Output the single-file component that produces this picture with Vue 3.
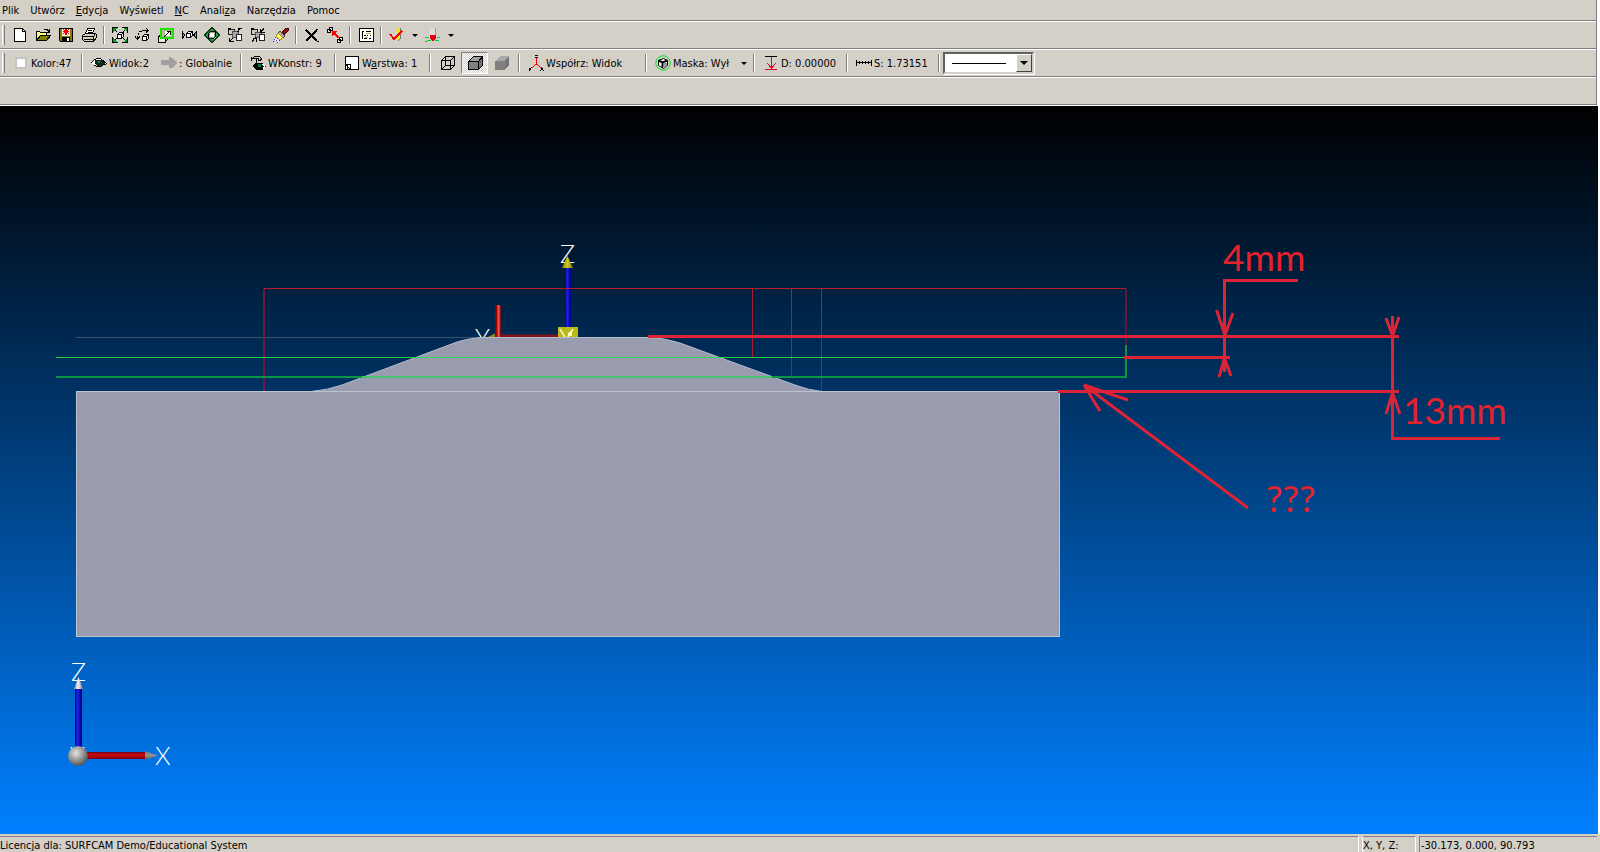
<script setup>
import { ref } from 'vue'

const menus = [
  { before: 'Plik' },
  { before: 'Utwórz' },
  { key: 'E', after: 'dycja' },
  { before: 'Wyświetl' },
  { key: 'N', after: 'C' },
  { before: 'Anali', key: 'z', after: 'a' },
  { before: 'Narzędzia' },
  { before: 'Pomoc' },
]

const O = '#000'
const D = '#808000'
const icons = {
  new: [
    { d: 'M2.5 1.5h8l3 3v10h-11z', f: '#fff', s: O },
    { d: 'M10.5 1.5v3h3', s: O },
  ],
  open: [
    { d: 'M1.5 13.5v-9h3l1 1h6v3', f: '#ffff80', s: O },
    { d: 'M1.5 13.5l4-5h10l-4 5z', f: D, s: O },
    { d: 'M9 2.5h3l2 2M14.5 2v3h-3', s: O },
  ],
  save: [
    { d: 'M1.5 1.5h13v13h-12l-1-1z', f: D, s: O },
    { d: 'M4 2h8v7h-8z', f: '#f4e8e8' },
    { d: 'M4 10h8v4h-8z', f: O },
    { d: 'M9 11h2v3h-2z', f: '#fff' },
    { d: 'M7 2h2v6h-2zM5 4h6v1h-6zM5 2h1v1h-1zM10 2h1v1h-1zM5 6h1v1h-1zM10 6h1v1h-1zM6 3h4v3h-4z', f: '#f00' },
  ],
  print: [
    { d: 'M4.5 6.5l2-5h7l-2 5z', f: '#fff', s: O },
    { d: 'M7 3.5h4M6.5 5.5h4', s: O },
    { d: 'M1.5 8.5l3-2h10l-2 3h-11zM1.5 8.5v4l2 2h9l3-4v-4', f: '#d4d0c8', s: O },
    { d: 'M1.5 9.5h11v4M3 12.5h9', s: O },
    { d: 'M8 11h3v1h-3z', f: '#dd0' },
  ],
  fit: [
    { d: 'M5.5 7.5h4v4h-4zM5.5 7.5l2-2h4v4l-2 2M9.5 7.5l2-2', f: '#fff', s: O },
    { d: 'M1 1h4l-4 4zM15 1v4l-4-4zM1 15v-4l4 4zM15 15h-4l4-4z', f: '#00a020' },
    { d: 'M.5 6v-5.500h5M10 .5h5.500v5.500M.5 10v5.500h5M10 15.500h5.500v-5.500', s: O },
    { d: 'M3 3l2 2M13 3l-2 2M3 13l2-2M13 13l-2-2', s: O },
  ],
  rotate: [
    { d: 'M7.5 9.5h4v4h-4zM7.5 9.5l2-2h4v4l-2 2M11.5 9.5l2-2', f: '#fff', s: O },
    { d: 'M2.5 12v-3M3.500 8v-2M4 4.500h3M7 3.500h6M11 1l2.500 2.500-2.500 2M0 9.500l2.500 3 2.500-3', s: O },
  ],
  zoomwin: [
    { d: 'M.5 9.5h7v6h-7z', f: '#e8e8e8', s: O },
    { d: 'M.5 9.5l4-3h6v5l-3 3', s: O },
    { d: 'M3 2h12v9h-12z', f: '#b8b890', s: '#20e000', w: 2 },
    { d: 'M7 4h6v5h-6z', f: '#fff' },
    { d: 'M6 10l5-5M9 4.5h3v3', s: O },
  ],
  zoomout: [
    { d: 'M5.5 6.5h4v4h-4zM5.5 6.5l2-2h4v4l-2 2M9.5 6.5l2-2', f: '#fff', s: O },
    { d: 'M1 4.5l3 3.500-3 3.500zM15.5 4.5l-3 3.500 3 3.500z', f: '#20d040', s: O },
  ],
  pan: [
    { d: 'M8 .5l4 4h-8zM8 15.5l4-4h-8zM.5 8l4-4v8zM15.5 8l-4-4v8z', f: '#20a840' },
    { d: 'M4 4.500l4-4 4 4M4 11.500l4 4 4-4M4.500 4l-4 4 4 4M11.500 4l4 4-4 4', s: '#103818' },
    { d: 'M4.5 6.5l2-2h5v5l-2 2h-5z', f: '#a0a0a0', s: O },
    { d: 'M6 6h4v4h-4z', f: '#fff' },
  ],
  viewprev: [
    { d: 'M1.5 2.5h6v5h-6z', f: '#c8c8c8', s: '#222' },
    { d: 'M5 4h6v6h-6z', f: '#a8a8a8', s: '#555' },
    { d: 'M9.5 7.5h5v6h-5z', f: '#fff', s: '#222' },
    { d: 'M10 5l4-4M14.5 1.500h-4M11.500 1v4M6 11l-3 3.500M2.5 11v3.5h4', s: O },
    { d: 'M1 1.5h3', s: O, w: 2 },
  ],
  viewnext: [
    { d: 'M1.5 2.5h6v5h-6z', f: '#c8c8c8', s: '#222' },
    { d: 'M5 5h6v5h-6z', f: '#a8a8a8', s: '#555' },
    { d: 'M9.5 7.5h5v6h-5z', f: '#fff', s: '#222' },
    { d: 'M10 5.5l4-4M10.5 2v3.5h4M6 10l-4 4.500M2.5 11.5h3.5v3', s: O },
    { d: 'M1 1.5h3', s: O, w: 2 },
  ],
  brush: [
    { d: 'M9 5l4-4h2v3l-4 4z', f: '#901010', s: '#400' },
    { d: 'M7 4l5 5-2 2-5-5z', f: '#a8a8a8', s: '#444' },
    { d: 'M5 6l5 5-3 2-4-4z', f: '#ffff80', s: '#c0a030' },
    { d: 'M2 10l5 4-4 1-2-2z', f: '#f0f0ff' },
    { d: 'M2 10h1v1h-1zM4 11h1v1h-1zM1 12h1v1h-1zM3 13h1v1h-1zM6 13h1v1h-1zM0 14h1v1h-1zM4 15h1v1h-1z', f: '#22f' },
  ],
  del: [
    { d: 'M2 3l11 11M13.5 2l-11 12', s: O, w: 2 },
    { d: 'M13 14.5h2', s: O },
  ],
  chain: [
    { d: 'M.5 2.5h3v3h-3zM2.5 .5h3v3h-3zM10.5 12.500h3v3h-3zM12.5 10.500h3v3h-3z', f: '#e8e6e0', s: O },
    { d: 'M12 11l-5-5', s: '#f00', w: 2 },
    { d: 'M5 4h5l-5 5z', f: '#f00' },
  ],
  list: [
    { d: 'M1.5 1.5h14v13h-14z', f: '#fff', s: O },
    { d: 'M4 4.5h2M8 4.5h5M4.5 4v8M6 8.5h2M9 8.5h1M12 8.5h1M6 11.5h3M11 11.5h2', s: O },
    { d: 'M8 6.5h5M7 10h3', s: '#aaa850' },
  ],
  check: [
    { d: 'M6 1h5v9l-2 4-3-4z', f: '#d8d4b0' },
    { d: 'M8 1h3v9l-2 4z', f: '#f0e800' },
    { d: 'M11.5 1v10l-2 3', s: '#777' },
    { d: 'M1 7l4 5 8-8', s: '#f00', w: 2 },
  ],
  probe: [
    { d: 'M5 1h6v8h-6z', f: '#e0dcd8' },
    { d: 'M10.5 1v8', s: '#999' },
    { d: 'M5 8h6v3l-3 4-3-4z', f: '#e00010' },
    { d: 'M0 10.5h4M12 10.5h3M2 13.5h4M10 13.5h4M0 14.5h2', s: '#00d040' },
  ],
  swatch: [{ d: 'M3 3h10v10h-10z', f: '#fff', s: '#c2c4c6', w: 2 }],
  eye: [
    { d: 'M0 8q4-5 9-4l6 4q-3 4-8 4z', f: '#fff' },
    { d: 'M4 5h7l3 3-4 4h-3l-3-3z', f: '#102818' },
    { d: 'M7 6h2v2h-2z', f: '#009050' },
    { d: 'M0 8q4-5 9-4.5l7 5M3 10q3 2 6 2M12 10l3-1', s: O },
  ],
  arrow: [{ d: 'M0 5h8v-3l3 1 5 5-5 5h-3v-3h-8z', f: '#a0a0a0' }],
  plane: [
    { d: 'M2.5 3.5l2-2h5l2 2-1 2h-2v-2h-4zM6 4v6M3 10.5l4 4h5l3-3-3-3h-4', f: '#d4d0c8', s: O },
    { d: 'M5 8h7l2 3-3 4h-4l-3-4z', f: O },
    { d: 'M8 9h3v3h-3z', f: '#008040' },
    { d: 'M12 9l3 2-2 3', s: '#fff' },
    { d: 'M1.5 2v4', s: O },
  ],
  layer: [
    { d: 'M1.5 1.5h13v13h-13z', f: '#fff', s: O },
    { d: 'M2 9.5h4.5v5M2 10l4 4M3.5 10v4', s: O },
  ],
  wire: [
    { d: 'M1.5 5.5h9v9h-9zM5.5 1.5h9v9h-9zM1.5 5.5l4-4M10.5 5.5l4-4M1.5 14.5l4-4M10.5 14.5l4-4', s: O },
  ],
  shaded: [
    { d: 'M1.5 6.5l5-5h9v9l-4 4h-10z', f: '#a0a0a0', s: O },
    { d: 'M1.5 6.5h10v8h-10z', f: '#808080', s: O },
    { d: 'M11.5 6.5l4-5v9l-4 4z', f: '#707070', s: O },
  ],
  solid: [
    { d: 'M1 6l5-5h9l-4 5z', f: '#a9a9a9' },
    { d: 'M1 6h10v9h-10z', f: '#808080' },
    { d: 'M11 6l4-5v9l-4 5z', f: '#747478' },
  ],
  axes: [
    { d: 'M8.5 3v6l-5 4M8.5 9l5 4', s: '#f00000' },
    { d: 'M7 .5h3M7 2.5h3M1 13l1 1M3 13l-2 3M13 13l3 3M15 13l-3 3', s: O },
  ],
  mask: [
    { d: 'M8 .8a7.200 7.200 0 1 0 .1 0z', f: '#d4d0c8', s: '#00e020' },
    { d: 'M3.5 5.5l5-2 4 2v5l-4 3-5-3z', f: '#fff', s: O },
    { d: 'M3.5 5.5l4 2 5-2M7.5 7.5v5', s: O, w: 2 },
    { d: 'M9 8h3v3l-3 2z', f: '#999' },
  ],
  depth: [
    { d: 'M2 1.5h12', s: O },
    { d: 'M8.5 2v11M4 8l4.5 5 4.500-5M2 14.5h12', s: '#f00020' },
  ],
  scale: [{ d: 'M.5 5v6M15.5 5v6M0 7.5h16M3.5 6v3M6.5 6v3M9.5 6v3M12.5 6v3', s: O }],
}

const topTools = [
  ['new', 'Nowy'], ['open', 'Otwórz'], ['save', 'Zapisz'], ['print', 'Drukuj'], null,
  ['fit', 'Dopasuj'], ['rotate', 'Obróć'], ['zoomwin', 'Okno'], ['zoomout', 'Pomniejsz'],
  ['pan', 'Przesuń'], ['viewprev', 'Poprzedni'], ['viewnext', 'Następny'], ['brush', 'Odśwież'], null,
  ['del', 'Usuń'], ['chain', 'Łańcuch'], null,
  ['list', 'Lista'], null,
  ['check', 'Sprawdź', true], ['probe', 'Sonda', true],
]

const stateTools = [
  { icon: 'swatch', text: 'Kolor:47', w: 'w70' }, null,
  { icon: 'eye', text: 'Widok:2', w: 'w70' },
  { icon: 'arrow', text: ': Globalnie', w: 'w81' }, null,
  { icon: 'plane', text: 'WKonstr: 9', w: 'w86' }, null,
  { icon: 'layer', text: 'W', key: 'a', after: 'rstwa: 1', w: 'w87' }, null,
  { icon: 'wire', label: 'Krawędzie', w: 'shade' },
  { icon: 'shaded', label: 'Cieniowanie z krawędziami', w: 'shade', on: true },
  { icon: 'solid', label: 'Cieniowanie', w: 'shade' }, null,
  { icon: 'axes', text: 'Współrz: Widok', w: 'w119' }, null,
  { icon: 'mask', text: 'Maska: Wył', w: 'w87', caret: true }, null,
  { icon: 'depth', text: 'D: 0.00000', w: 'w85' }, null,
  { icon: 'scale', text: 'S: 1.73151', w: 'w84' }, null,
]

const lineStyle = ref('solid')
</script>

<template>
  <div class="app">
    <header class="bars">
      <nav class="menu">
        <button v-for="(m, i) in menus" :key="i" type="button" class="menu-item">{{ m.before }}<u v-if="m.key">{{ m.key }}</u>{{ m.after }}</button>
      </nav>

      <div class="bar">
        <span class="grip"></span>
        <template v-for="(t, i) in topTools" :key="i">
          <span v-if="!t" class="sep"></span>
          <template v-else>
            <button type="button" class="tool" :aria-label="t[1]">
              <svg class="icon" viewBox="0 0 16 16">
                <path v-for="(p, k) in icons[t[0]]" :key="k" :d="p.d" :fill="p.f || 'none'" :stroke="p.s || 'none'" :stroke-width="p.w || 1" />
              </svg>
            </button>
            <button v-if="t[2]" type="button" class="caret" :aria-label="t[1] + ' – opcje'"></button>
          </template>
        </template>
      </div>

      <div class="bar">
        <span class="grip"></span>
        <template v-for="(t, i) in stateTools" :key="i">
          <span v-if="!t" class="sep"></span>
          <template v-else>
            <button type="button" class="state" :class="[t.w, { on: t.on }]" :aria-label="t.label">
              <svg class="icon" :class="{ smooth: t.icon === 'mask' }" viewBox="0 0 16 16">
                <path v-for="(p, k) in icons[t.icon]" :key="k" :d="p.d" :fill="p.f || 'none'" :stroke="p.s || 'none'" :stroke-width="p.w || 1" />
              </svg>
              <span v-if="t.text">{{ t.text }}<u v-if="t.key">{{ t.key }}</u>{{ t.after }}</span>
            </button>
            <button v-if="t.caret" type="button" class="caret" aria-label="Maska – opcje"></button>
          </template>
        </template>
        <div class="combo">
          <select v-model="lineStyle" aria-label="Rodzaj linii">
            <option value="solid"></option>
          </select>
          <span class="combo-line"></span>
          <span class="combo-btn"></span>
        </div>
      </div>

      <div class="bar"></div>
    </header>

    <main class="view">
      <svg class="scene" viewBox="0 106 1598 728" preserveAspectRatio="xMinYMin meet">
        <defs>
          <linearGradient id="blueShaft"><stop offset="0" stop-color="#000080" /><stop offset=".35" stop-color="#2020f0" /><stop offset="1" stop-color="#000078" /></linearGradient>
          <linearGradient id="redShaft"><stop offset="0" stop-color="#800000" /><stop offset=".3" stop-color="#b00000" /><stop offset=".6" stop-color="#e86060" /><stop offset="1" stop-color="#600000" /></linearGradient>
          <linearGradient id="redBar" x2="0" y2="1"><stop offset="0" stop-color="#700018" /><stop offset=".4" stop-color="#d00808" /><stop offset="1" stop-color="#780010" /></linearGradient>
          <linearGradient id="coneUp"><stop offset="0" stop-color="#888" /><stop offset=".45" stop-color="#f4f4f4" /><stop offset="1" stop-color="#777" /></linearGradient>
          <linearGradient id="coneSide" x2="0" y2="1"><stop offset="0" stop-color="#777" /><stop offset=".5" stop-color="#909090" /><stop offset="1" stop-color="#555" /></linearGradient>
          <linearGradient id="coneGold"><stop offset="0" stop-color="#8c8a00" /><stop offset=".5" stop-color="#d0ca20" /><stop offset="1" stop-color="#777400" /></linearGradient>
          <radialGradient id="ball" cx=".4" cy=".35" r=".65"><stop offset="0" stop-color="#e4e4e4" /><stop offset=".5" stop-color="#a0a0a0" /><stop offset="1" stop-color="#555" /></radialGradient>
        </defs>

        <!-- work coordinate system -->
        <path d="M76 337.5H484" stroke="#3a5272" />
        <text class="axis" x="560" y="263">Z</text>
        <path d="M567.5 256L573 268H562z" fill="url(#coneGold)" />
        <rect x="565" y="268" width="6" height="60" fill="url(#blueShaft)" />
        <path d="M501 336H560" stroke="#86101c" stroke-width="3" />
        <path d="M486 338L496 333V338z" fill="#8c8a20" />
        <rect x="495" y="305" width="6" height="33" rx="2" fill="url(#redShaft)" />
        <rect x="558" y="327" width="20" height="11" fill="#bcb818" />
        <path d="M568 333l4-2v5h-4z" fill="#ffffa0" />
        <text class="axis" x="475" y="347">Y</text>
        <text class="axis" x="559" y="347">Y</text>

        <!-- part -->
        <path d="M311 391.5Q328 390 342 385L457 342Q472 337.5 484 337.5H648Q663 337.5 680 343L795 385Q808 390 822 391.5z" fill="#999cae" stroke="#b4bccb" />
        <rect x="76.5" y="391.5" width="983" height="245" fill="#999cae" stroke="#bcc4d0" />

        <!-- tool paths -->
        <g fill="none">
          <path d="M264 391V289" stroke="#6c1c38" stroke-width="2" />
          <path d="M264 288.5H1126" stroke="#b81c2c" />
          <path d="M752.5 289V357M791.5 289V376M821.5 289V391" stroke="#a81c30" />
          <path d="M1126 289V345" stroke="#5c1c38" stroke-width="2" />
          <path d="M1126 345V377H56" stroke="#0b9444" stroke-width="2" />
          <path d="M56 357.5H1126" stroke="#20d03c" />
          <path d="M416 357.5H724" stroke="#30d858" />
          <path d="M362 377H772" stroke="#48c46c" stroke-width="2" />
        </g>

        <!-- dimensions -->
        <g class="dim">
          <path d="M648 336.5H1399M1124 357.5H1230M1058 391.5H1399" />
          <path d="M1298 280.5H1224.5V372" />
          <path d="M1216.5 310L1225 335L1233 313M1219 377L1224.5 358L1231 376" />
          <path d="M1392.5 316V438.5H1500" />
          <path d="M1386 318L1392.5 336L1399 317M1386 414L1392.5 393L1400 414" />
          <path d="M1248 508L1084 385L1100 411M1084 385L1128 400" />
        </g>
        <g class="dim-text">
          <text x="1223" y="271">4mm</text>
          <text x="1403" y="424">13mm</text>
          <text x="1266" y="512">???</text>
        </g>

        <!-- view triad -->
        <text class="axis" x="71" y="681">Z</text>
        <text class="axis" x="155" y="765">X</text>
        <text class="axis" x="70" y="765">Y</text>
        <rect x="75" y="688" width="7" height="62" fill="url(#blueShaft)" />
        <path d="M78.5 677L83 689H74z" fill="url(#coneUp)" />
        <rect x="86" y="752" width="60" height="7" fill="url(#redBar)" />
        <path d="M158 755.5L145 760V751z" fill="url(#coneSide)" />
        <circle cx="78" cy="756" r="10" fill="url(#ball)" />
      </svg>
    </main>

    <footer class="status">
      <span class="cell licence">Licencja dla: SURFCAM Demo/Educational System</span>
      <span class="cell axes-label">X, Y, Z:</span>
      <span class="cell coords">-30.173, 0.000, 90.793</span>
    </footer>
  </div>
</template>

<style>
body {
  margin: 0;
  background: #fff;
}
</style>

<style scoped>
.app {
  min-height: 100vh;
  display: flex;
  flex-direction: column;
  font: 11px/14px "DejaVu Sans Condensed", "DejaVu Sans", sans-serif;
  font-stretch: condensed;
  color: #000;
  overflow: hidden;
}
button {
  font: inherit;
  color: inherit;
  background: none;
  border: 0;
  padding: 0;
  margin: 0;
}
.bars {
  background: #d4d0c8;
  margin-right: 3px;
  border-right: 1px solid #808080;
  border-bottom: 1px solid #fff;
}
.menu {
  display: flex;
  gap: 11px;
  height: 18px;
  padding: 2px 0 0 2px;
  align-items: center;
  border-bottom: 1px solid #808080;
}
.menu-item {
  white-space: nowrap;
}
.bar {
  display: flex;
  align-items: center;
  height: 26px;
  border-top: 1px solid #fff;
  border-bottom: 1px solid #808080;
}
.grip {
  width: 1px;
  height: 20px;
  margin: 0 3px 0 2px;
  border-left: 1px solid #fff;
  border-right: 1px solid #808080;
}
.sep {
  flex: none;
  width: 2px;
  height: 18px;
  margin: 0 3px;
  box-sizing: border-box;
  border-left: 1px solid #808080;
  border-right: 1px solid #fff;
}
.tool {
  width: 23px;
  height: 22px;
  display: grid;
  place-items: center;
}
.icon {
  width: 16px;
  height: 16px;
  flex: none;
  shape-rendering: crispEdges;
}
.smooth {
  shape-rendering: auto;
}
.caret {
  width: 13px;
  height: 22px;
  display: grid;
  place-items: center;
}
.caret::before,
.combo-btn::before {
  content: "";
  border: 3px solid transparent;
  border-top-color: #000;
  border-bottom: 0;
}
.combo-btn::before {
  border-width: 4px 4px 0;
}
.state {
  display: flex;
  align-items: center;
  gap: 2px;
  height: 22px;
  padding-left: 5px;
  box-sizing: border-box;
  white-space: nowrap;
}
.state span {
  padding-top: 1px;
}
.w70 { width: 70px; }
.w81 { width: 81px; }
.w84 { width: 84px; }
.w85 { width: 85px; }
.w86 { width: 86px; }
.w87 { width: 87px; }
.w119 { width: 119px; }
.shade {
  width: 27px;
  justify-content: center;
  padding: 0;
}
.on {
  background: repeating-conic-gradient(#fff 0 25%, #d4d0c8 0 50%) 0 0 / 2px 2px;
  border: 1px solid;
  border-color: #808080 #fff #fff #808080;
}
.combo {
  position: relative;
  display: flex;
  align-items: center;
  width: 91px;
  height: 22px;
  box-sizing: border-box;
  background: #fff;
  border: 2px solid;
  border-color: #606060 #d4d0c8 #d4d0c8 #606060;
  box-shadow: 1px 1px #fff;
}
.combo select {
  position: absolute;
  inset: 0;
  width: 100%;
  appearance: none;
  border: 0;
  background: transparent;
}
.combo-line {
  flex: 1;
  height: 1px;
  margin: 0 10px 0 7px;
  background: #000;
  pointer-events: none;
}
.combo-btn {
  display: grid;
  place-items: center;
  width: 16px;
  height: 18px;
  box-sizing: border-box;
  background: #d4d0c8;
  border: 1px solid;
  border-color: #fff #404040 #404040 #fff;
  pointer-events: none;
}
.view {
  flex: 1;
  margin-right: 2px;
  background: linear-gradient(#000, #0080ff);
}
.scene {
  display: block;
  width: 100%;
}
.axis {
  font: 300 25px Lato, sans-serif;
  fill: #fff;
}
.dim {
  fill: none;
  stroke: #dc2436;
  stroke-width: 3;
}
.dim-text {
  font: 37px Lato, sans-serif;
  fill: #e4222e;
}
.status {
  display: flex;
  gap: 3px;
  height: 16px;
  padding: 2px 3px 0 0;
  background: #d4d0c8;
}
.cell {
  box-sizing: border-box;
  line-height: 17px;
  white-space: nowrap;
  border-top: 1px solid #808080;
}
.licence {
  flex: 1;
  border-right: 1px solid #fff;
}
.axes-label {
  width: 54px;
  border-left: 1px solid #fff;
  border-right: 1px solid #fff;
}
.coords {
  width: 178px;
  padding-left: 1px;
  border-left: 1px solid #808080;
}
</style>
